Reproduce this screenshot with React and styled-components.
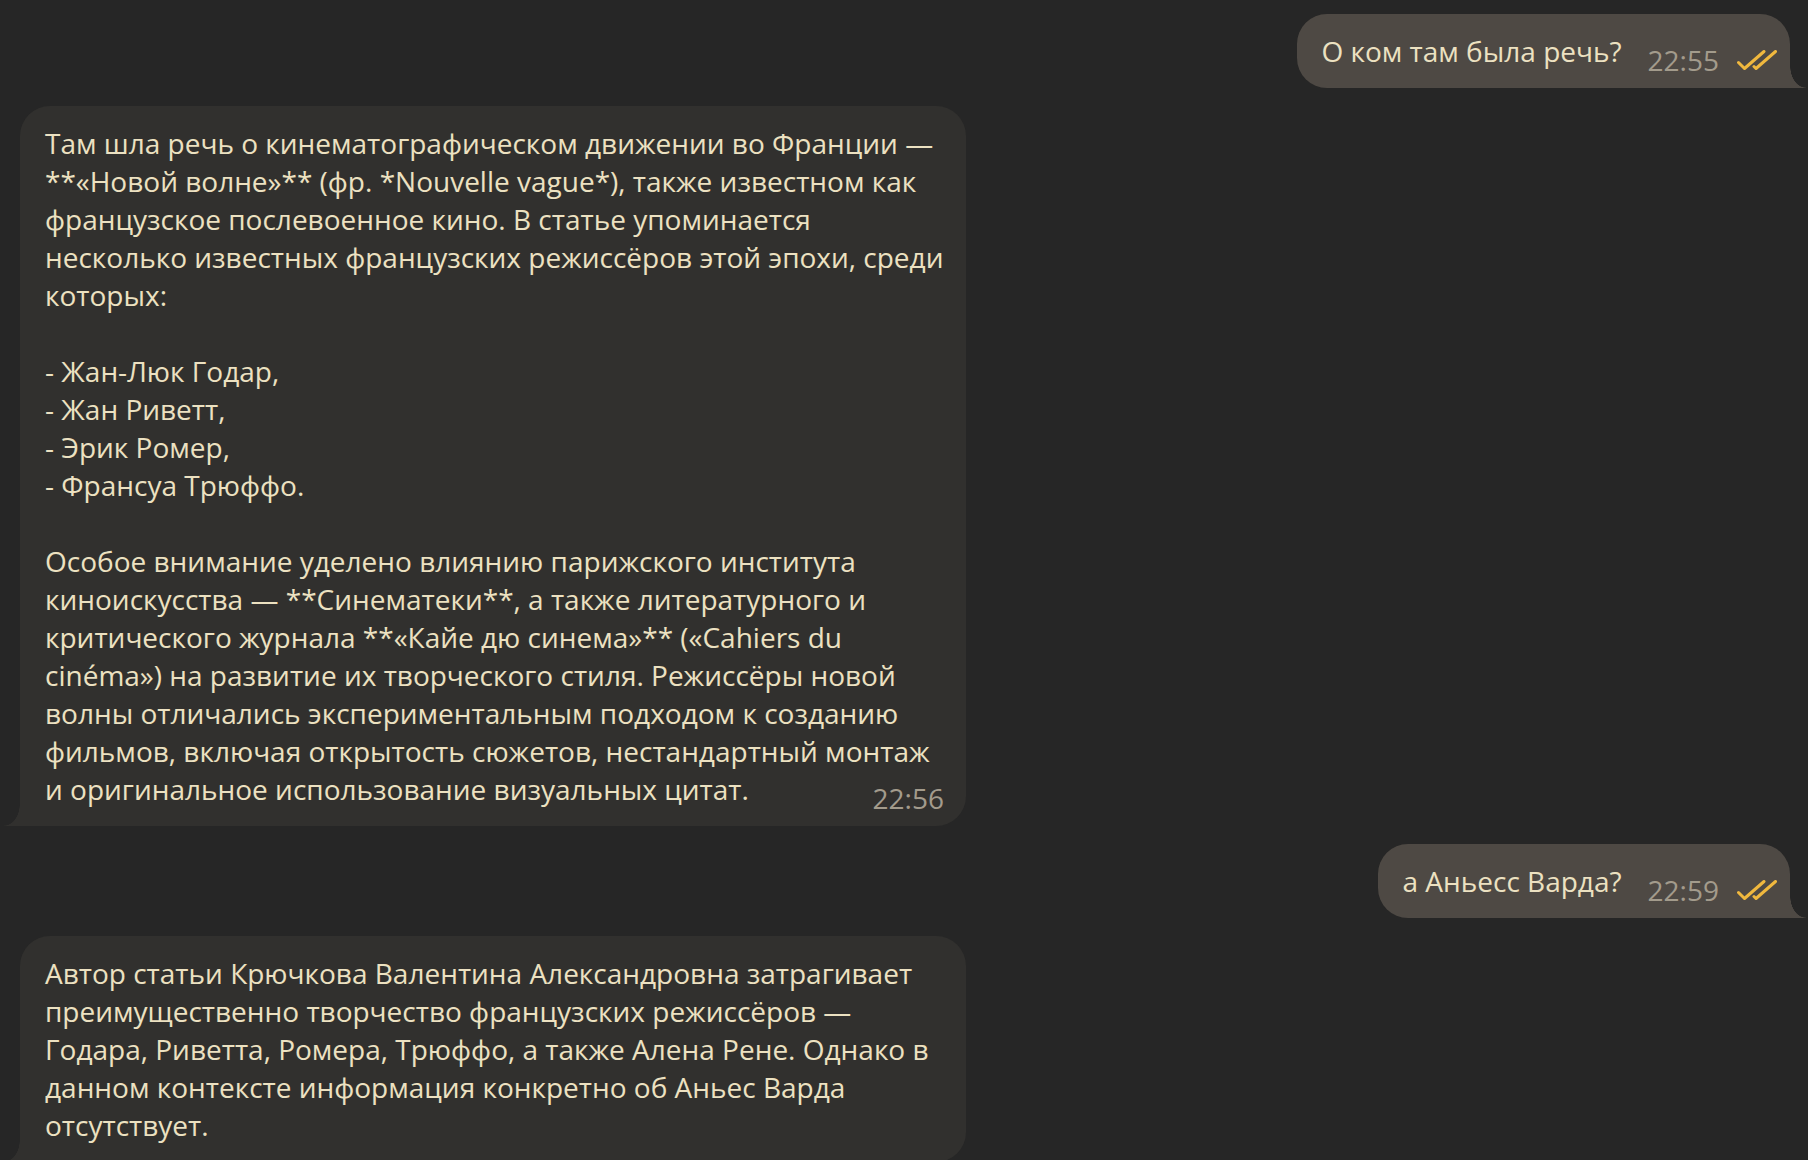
import React from 'react'
import styled, { createGlobalStyle } from 'styled-components'

const Global = createGlobalStyle`
  html, body {
    margin: 0;
    padding: 0;
    height: 100%;
    overflow: hidden;
    background: #262626;
  }
  body {
    font-family: "Open Sans", "Noto Sans", sans-serif;
  }
`

const Chat = styled.div`
  display: flex;
  flex-direction: column;
  gap: 18px;
  padding: 14px 18px 0 20px;
  height: 1160px;
  box-sizing: border-box;
  overflow: hidden;
  background: #262626;
`

const Row = styled.div`
  display: flex;
  justify-content: ${p => (p.$out ? 'flex-end' : 'flex-start')};
`

const Bubble = styled.div`
  position: relative;
  box-sizing: border-box;
  padding: ${p => (p.$out ? '18px 13px 18px 24px' : '18px 22px 18px 25px')};
  border-radius: 30px;
  border-bottom-right-radius: ${p => (p.$out ? '0' : '30px')};
  border-bottom-left-radius: ${p => (p.$out ? '30px' : '0')};
  background: ${p => (p.$out ? '#4e4944' : '#31302e')};
  width: ${p => (p.$out ? 'auto' : '946px')};
  display: ${p => (p.$out ? 'flex' : 'grid')};
  align-items: flex-end;
  gap: 26px;

  &::after {
    content: '';
    position: absolute;
    bottom: 0;
    width: 16px;
    height: 22px;
    ${p =>
      p.$out
        ? `right: -16px;
           background: radial-gradient(ellipse 16px 22px at 100% 0, transparent 97%, #4e4944 100%);`
        : `left: -16px;
           background: radial-gradient(ellipse 16px 22px at 0 0, transparent 97%, #31302e 100%);`}
  }
`

const Text = styled.div`
  grid-area: 1 / 1;
  white-space: pre;
  font-size: 28px;
  line-height: 38px;
  color: #ece1c1;
`

const Meta = styled.div`
  grid-area: 1 / 1;
  justify-self: end;
  align-self: end;
  display: flex;
  align-items: center;
  gap: 18px;
  margin-bottom: -9px;
  font-size: 28px;
  line-height: 37px;
  color: #a39b8c;
`

const Checks = () => (
  <svg width="40" height="21" viewBox="0 0 40 21" fill="none">
    <path d="M1.5 12.5 L7.5 18.5 L27 1.5" stroke="#f0b83e" strokeWidth="3" strokeLinecap="round" strokeLinejoin="round" />
    <path d="M17 16.5 L19 18.5 L38.5 1.5" stroke="#f0b83e" strokeWidth="3" strokeLinecap="round" strokeLinejoin="round" />
  </svg>
)

const messages = [
  { out: true, time: '22:55', text: 'О ком там была речь?' },
  {
    out: false,
    time: '22:56',
    text: [
      'Там шла речь о кинематографическом движении во Франции —',
      '**«Новой волне»** (фр. *Nouvelle vague*), также известном как',
      'французское послевоенное кино. В статье упоминается',
      'несколько известных французских режиссёров этой эпохи, среди',
      'которых:',
      '',
      '- Жан-Люк Годар,',
      '- Жан Риветт,',
      '- Эрик Ромер,',
      '- Франсуа Трюффо.',
      '',
      'Особое внимание уделено влиянию парижского института',
      'киноискусства — **Синематеки**, а также литературного и',
      'критического журнала **«Кайе дю синема»** («Cahiers du',
      'cinéma») на развитие их творческого стиля. Режиссёры новой',
      'волны отличались экспериментальным подходом к созданию',
      'фильмов, включая открытость сюжетов, нестандартный монтаж',
      'и оригинальное использование визуальных цитат.',
    ].join('\n'),
  },
  { out: true, time: '22:59', text: 'а Аньесс Варда?' },
  {
    out: false,
    text: [
      'Автор статьи Крючкова Валентина Александровна затрагивает',
      'преимущественно творчество французских режиссёров —',
      'Годара, Риветта, Ромера, Трюффо, а также Алена Рене. Однако в',
      'данном контексте информация конкретно об Аньес Варда',
      'отсутствует.',
    ].join('\n'),
  },
]

export default function App() {
  return (
    <>
      <Global />
      <Chat>
        {messages.map((m, i) => (
          <Row key={i} $out={m.out}>
            <Bubble $out={m.out}>
              <Text>{m.text}</Text>
              {m.time && (
                <Meta>
                  <span>{m.time}</span>
                  {m.out && <Checks />}
                </Meta>
              )}
            </Bubble>
          </Row>
        ))}
      </Chat>
    </>
  )
}
